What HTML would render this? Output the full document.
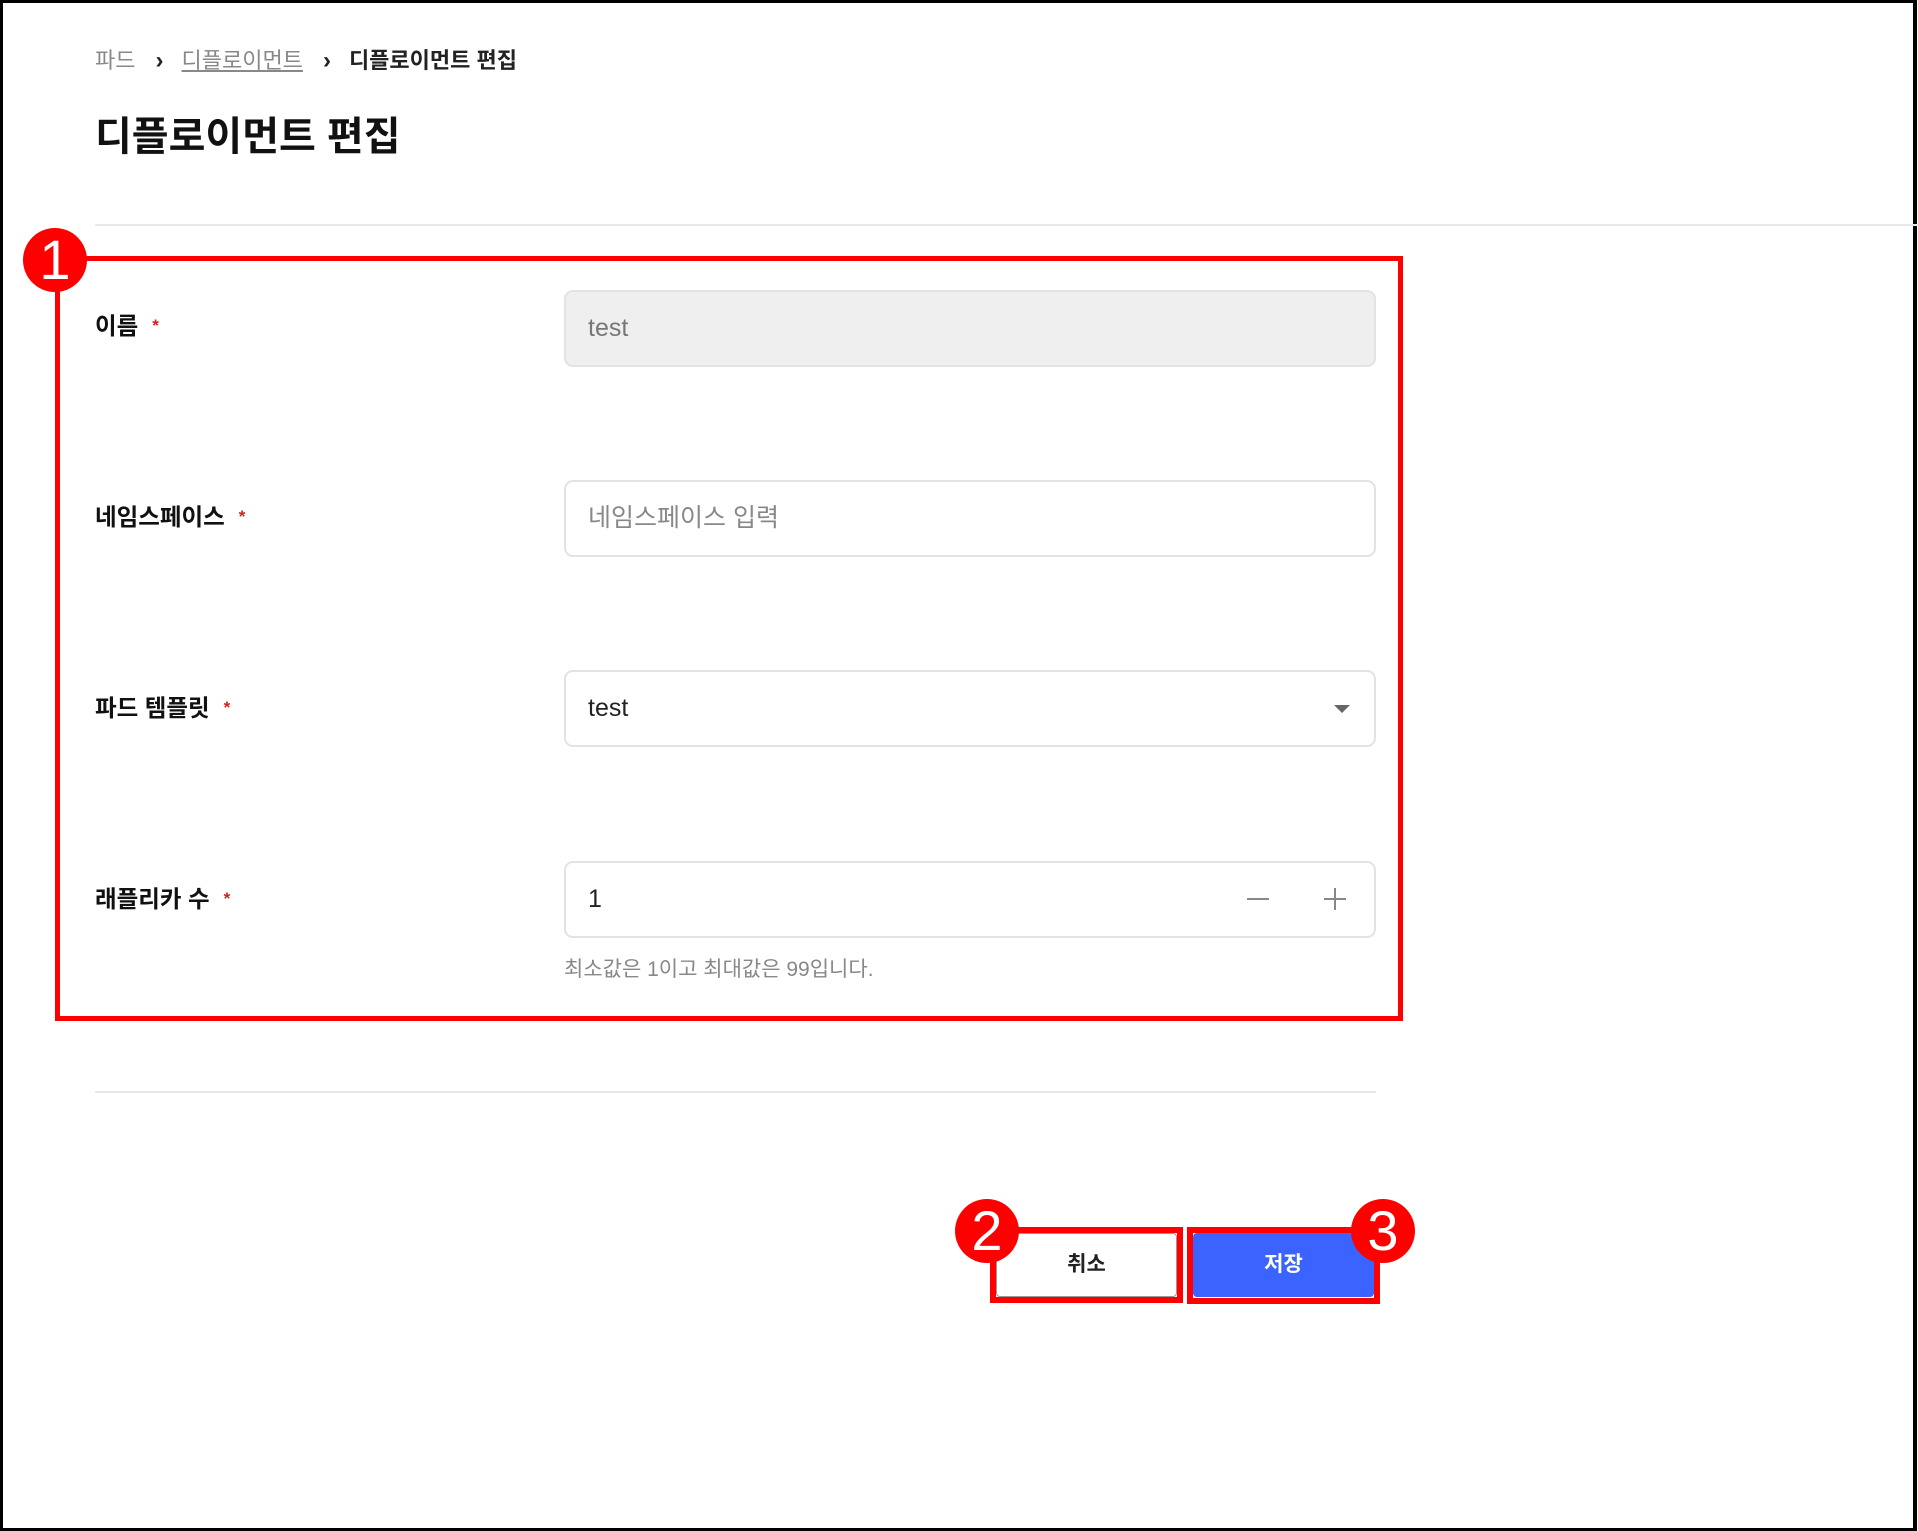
<!DOCTYPE html>
<html><head><meta charset="utf-8"><style>
*{margin:0;padding:0;box-sizing:border-box}
body{width:1918px;height:1531px;position:relative;background:#fff;font-family:"Liberation Sans","Noto Sans CJK KR",sans-serif;overflow:hidden}
.frame{position:absolute;left:0;top:0;width:1917px;height:1531px;border:3px solid #000;border-right-width:4px}
.a{position:absolute}
.lbl{position:absolute;left:95px;font-size:23.5px;font-weight:bold;color:#111;line-height:30px}
.lbl span{color:#d0201c;font-size:17px;margin-left:14px;vertical-align:top}
.inp{position:absolute;left:564px;width:812px;height:77px;border:2px solid #e3e3e3;border-radius:9px;font-size:25px;line-height:73px;padding-left:22px;color:#222}
.circ{position:absolute;width:64px;height:64px;border-radius:50%;background:#f00;color:#fff;font-family:"Liberation Sans",sans-serif;font-size:56px;line-height:64px;text-align:center}
</style></head><body>
<div class="frame"></div>
<div class="a" style="left:95px;top:46px;font-size:22px;line-height:30px;color:#222">
<span style="color:#888">파드</span><span style="font-weight:bold;margin:0 18px 0 20px;font-size:24px">›</span><span style="color:#888;text-decoration:underline">디플로이먼트</span><span style="font-weight:bold;margin:0 18px 0 20px;font-size:24px">›</span><span style="font-weight:bold">디플로이먼트 편집</span></div>
<div class="a" style="left:95px;top:111px;font-size:40px;font-weight:bold;line-height:52px;color:#111">디플로이먼트 편집</div>
<div class="a" style="left:95px;top:224px;width:1823px;height:2px;background:#e6e8eb"></div>

<div class="lbl" style="top:311px">이름<span>*</span></div>
<div class="inp" style="top:290px;background:#efefef;color:#777">test</div>
<div class="lbl" style="top:502px">네임스페이스<span>*</span></div>
<div class="inp" style="top:480px;color:#888">네임스페이스 입력</div>
<div class="lbl" style="top:693px">파드 템플릿<span>*</span></div>
<div class="inp" style="top:670px">test</div>
<div class="a" style="left:1334px;top:705px;width:0;height:0;border-left:8px solid transparent;border-right:8px solid transparent;border-top:8px solid #666"></div>
<div class="lbl" style="top:884px">래플리카 수<span>*</span></div>
<div class="inp" style="top:861px">1</div>
<div class="a" style="left:1247px;top:898px;width:22px;height:2px;background:#888"></div>
<div class="a" style="left:1324px;top:898px;width:22px;height:2px;background:#888"></div>
<div class="a" style="left:1334px;top:888px;width:2px;height:22px;background:#888"></div>
<div class="a" style="left:564px;top:956px;font-size:21px;line-height:28px;color:#888">최소값은 1이고 최대값은 99입니다.</div>

<div class="a" style="left:95px;top:1091px;width:1281px;height:2px;background:#e6e8eb"></div>

<div class="a" style="left:996px;top:1233px;width:181px;height:64px;border:1px solid #999;border-radius:4px;font-size:21px;font-weight:bold;text-align:center;line-height:62px;color:#222">취소</div>
<div class="a" style="left:1193px;top:1233px;width:181px;height:64px;background:#3b63ff;border-radius:4px;font-size:21px;font-weight:bold;text-align:center;line-height:64px;color:#fff">저장</div>

<div class="a" style="left:55px;top:256px;width:1348px;height:765px;border:5px solid #f00"></div>
<div class="a" style="left:990px;top:1227px;width:193px;height:76px;border:6px solid #f00"></div>
<div class="a" style="left:1187px;top:1227px;width:193px;height:77px;border:6px solid #f00"></div>
<div class="circ" style="left:23px;top:228px">1</div>
<div class="circ" style="left:955px;top:1199px">2</div>
<div class="circ" style="left:1351px;top:1199px">3</div>
</body></html>
